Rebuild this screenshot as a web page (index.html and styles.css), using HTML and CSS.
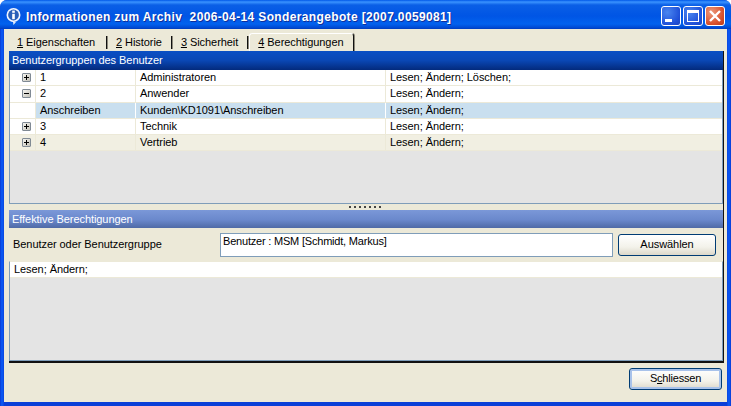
FILE: index.html
```html
<!DOCTYPE html>
<html lang="de">
<head>
<meta charset="utf-8">
<title>Informationen zum Archiv</title>
<link rel="stylesheet" href="styles.css">
</head>
<body>
<div class="window">
  <div class="titlebar">
    <svg class="appicon" width="18" height="18" viewBox="0 0 18 18">
      <path d="M5 13.5L8 15l.5 3 2.5-3z" fill="#dfe9fb"/>
      <circle cx="8.5" cy="8" r="7" fill="#f2f6ff"/>
      <circle cx="8.5" cy="8" r="5.4" fill="#2a5fb8"/>
      <rect x="7.2" y="3.6" width="2.6" height="2.2" fill="#fff"/>
      <rect x="7.2" y="6.8" width="2.6" height="5.4" fill="#fff"/>
    </svg>
    <div class="title">Informationen zum Archiv&nbsp; 2006-04-14 Sonderangebote [2007.0059081]</div>
    <div class="controls">
      <div class="ctl"><svg width="20" height="20" viewBox="0 0 20 20"><rect x="4" y="13" width="7" height="3" fill="#fff"/></svg></div>
      <div class="ctl"><svg width="20" height="20" viewBox="0 0 20 20"><rect x="4.5" y="4.5" width="11" height="11" fill="none" stroke="#fff"/><rect x="4" y="4" width="12" height="3" fill="#fff"/></svg></div>
      <div class="ctl close"><svg width="20" height="20" viewBox="0 0 20 20"><path d="M5 5l10 10M15 5L5 15" stroke="#fff" stroke-width="2.4" fill="none"/></svg></div>
    </div>
  </div>
  <div class="client">
    <div class="tabs">
      <div class="tab first"><u>1</u> Eigenschaften</div>
      <div class="tab"><u>2</u> Historie</div>
      <div class="tab"><u>3</u> Sicherheit</div>
      <div class="tab active"><u>4</u> Berechtigungen</div>
    </div>
    <div class="page">
      <div class="band dark">Benutzergruppen des Benutzer</div>
      <div class="grid upper">
        <div class="row white"><div class="c0"><span class="exp plus"></span></div><div class="c1">1</div><div class="c2">Administratoren</div><div class="c3">Lesen; Ändern; Löschen;</div></div>
        <div class="row white"><div class="c0"><span class="exp"></span></div><div class="c1">2</div><div class="c2">Anwender</div><div class="c3">Lesen; Ändern;</div></div>
        <div class="row selected"><div class="c0"></div><div class="c1">Anschreiben</div><div class="c2">Kunden\KD1091\Anschreiben</div><div class="c3">Lesen; Ändern;</div></div>
        <div class="row white"><div class="c0"><span class="exp plus"></span></div><div class="c1">3</div><div class="c2">Technik</div><div class="c3">Lesen; Ändern;</div></div>
        <div class="row cream"><div class="c0"><span class="exp plus"></span></div><div class="c1">4</div><div class="c2">Vertrieb</div><div class="c3">Lesen; Ändern;</div></div>
      </div>
      <div class="splitter"><span></span><span></span><span></span><span></span><span></span><span></span><span></span></div>
      <div class="band light">Effektive Berechtigungen</div>
      <div class="userrow">
        <div class="userlabel">Benutzer oder Benutzergruppe</div>
        <div class="userbox">Benutzer : MSM [Schmidt, Markus]</div>
        <div class="btn select">Auswählen</div>
      </div>
      <div class="grid lower">
        <div class="row white plain">Lesen; Ändern;</div>
      </div>
    </div>
    <div class="footer"><div class="btn default">S<u>c</u>hliessen</div></div>
  </div>
</div>
</body>
</html>
```
FILE: styles.css
```css
* { box-sizing: border-box; }
html, body { margin: 0; padding: 0; }
body { width: 731px; height: 406px; overflow: hidden; font: 11px/13px "Liberation Sans", Arial, sans-serif; letter-spacing: -0.06px; color: #000; }
.window { width: 731px; height: 406px; display: flex; flex-direction: column; border-radius: 7px 7px 0 0;
  background: linear-gradient(90deg, #0a2fc8 0, #0a55f0 1px, #0a55f0 3px, #0a3fd8 4px, #0a3fd8 727px, #0a55f0 728px, #0a55f0 730px, #0a2fc8 731px); }
.titlebar { height: 29px; flex: none; display: flex; align-items: center; padding: 1px 6px 0 5px; border-radius: 7px 7px 0 0;
  background: linear-gradient(#0058e8 0, #3a93ff 2px, #0a5fe6 5px, #0055e5 16px, #0262ee 24px, #0047d0 28px, #003bb8 29px); }
.appicon { flex: none; margin-right: 3px; margin-top: 2px; }
.title { flex: 1; color: #fff; font: bold 12px/16px "Liberation Sans", Arial, sans-serif; letter-spacing: 0.36px; white-space: nowrap; text-shadow: 1px 1px 0 #0f2f9a; padding-top: 3px; }
.controls { display: flex; gap: 2px; padding-top: 2px; }
.ctl { width: 20px; height: 20px; border: 1px solid #fff; border-radius: 3px; background: radial-gradient(circle at 30% 30%, #4a86f0, #1f50d8 70%, #1b44c0); }
.ctl svg { display: block; margin: -1px; }
.ctl.close { background: radial-gradient(circle at 30% 30%, #ec9a7c, #d8502c 65%, #b83a18); }
.client { flex: 1; margin: 0 4px 4px; background: #ece9d8; padding: 4px 3px 0 5px; display: flex; flex-direction: column; min-height: 0; }
.tabs { display: flex; height: 18px; flex: none; padding-left: 2px; }
.tab { height: 13px; margin-top: 3px; padding: 0 9px; border-right: 1px solid #111; box-shadow: 1px 0 0 #8d8a7c; white-space: nowrap; }
.tab.first { padding: 0 11px 0 6px; }
.tab.active { height: 18px; margin-top: 0; margin-left: 1px; background: #ece9d8; border-top: 1px solid #fff; border-left: 1px solid #fff; border-radius: 3px 3px 0 0; padding: 2px 9px 0 8px; }
.page { flex: none; height: 312px; border-right: 1px solid #111; border-bottom: 2px solid #111; display: flex; flex-direction: column; }
.band { flex: none; color: #fff; padding-left: 3px; }
.band.dark { height: 19px; line-height: 18px; background: linear-gradient(#0a4fc4, #0a47b4 50%, #032a7c); }
.band.light { height: 18px; line-height: 18px; background: linear-gradient(#7b98d8, #6a88cc 55%, #4f6aa6); }
.grid { background: #e4e4e4; border: 1px solid #7f9db9; border-top: 0; }
.grid.upper { height: 134px; flex: none; }
.grid.lower { flex: 1; border-top: 1px solid #ece9d8; }
.row { height: 16.25px; display: flex; line-height: 15px; border-bottom: 1px solid #ece9d8; white-space: nowrap; }
.row.white { background: #fff; }
.row.cream { background: #f1efe2; }
.row.selected { background: #c9dfef; }
.row.plain { padding-left: 4px; }
.c0 { width: 26px; flex: none; background: #fff; display: flex; align-items: center; justify-content: flex-end; padding-right: 4px; border-right: 1px solid #ece9d8; }
.row.cream .c0 { background: #f1efe2; }
.c1 { width: 100px; flex: none; padding-left: 4px; border-right: 1px solid #ece9d8; }
.c2 { width: 250px; flex: none; padding-left: 4px; border-right: 1px solid #ece9d8; }
.c3 { flex: 1; padding-left: 4px; }
.selected .c1, .selected .c2, .selected .c3 { border-color: #fff; }
.exp { position: relative; display: block; width: 9px; height: 9px; border: 1px solid #808a94; border-radius: 1px; background: linear-gradient(135deg, #f4f4f0, #c4c2b8); }
.exp::before { content: ""; position: absolute; left: 1px; top: 3px; width: 5px; height: 1px; background: #000; }
.exp.plus::after { content: ""; position: absolute; left: 3px; top: 1px; width: 1px; height: 5px; background: #000; }
.splitter { flex: none; height: 6px; display: flex; justify-content: center; align-items: center; gap: 3px; padding-right: 2px; }
.splitter span { width: 2px; height: 2px; background: #444; }
.userrow { flex: none; height: 33px; display: flex; align-items: center; }
.userlabel { width: 211px; flex: none; padding-left: 4px; }
.userbox { width: 393px; height: 24px; flex: none; background: #fff; border: 1px solid #7f9db9; padding: 1px 2px; letter-spacing: -0.2px; }
.btn { text-align: center; border: 1px solid #003c74; border-radius: 3px; background: linear-gradient(#fff, #f3f2ea 60%, #dcd8ca); line-height: 19px; }
.btn.select { width: 98px; height: 22px; margin-left: 5px; }
.footer { flex: 1; display: flex; justify-content: flex-end; align-items: flex-start; padding: 5px 2px 0 0; }
.btn.default { width: 93px; height: 22px; box-shadow: inset 0 0 0 2px #a8c2ea; letter-spacing: -0.2px; }
```
